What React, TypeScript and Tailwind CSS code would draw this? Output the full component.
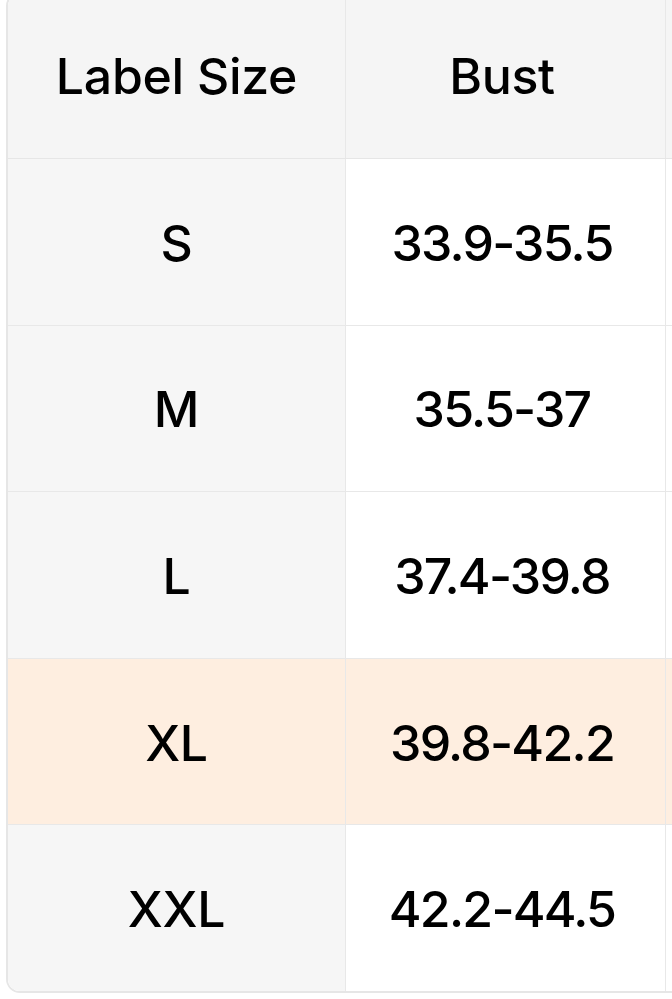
import React from "react";

type Row = {
  size: string;
  bust: string;
  active?: boolean;
};

const rows: Row[] = [
  { size: "S", bust: "33.9-35.5" },
  { size: "M", bust: "35.5-37" },
  { size: "L", bust: "37.4-39.8" },
  { size: "XL", bust: "39.8-42.2", active: true },
  { size: "XXL", bust: "42.2-44.5" },
];

function App() {
  return (
    <div className="w-[672px] h-[999px] overflow-hidden bg-white text-black font-['Inter','Liberation_Sans',sans-serif] font-medium tracking-[-0.018em]">
      <div className="ml-[6px] -mt-[8px] w-[1000px] border-2 border-[#e6e6e6] rounded-[14px] overflow-hidden">
        <div className="grid grid-cols-[338px_320px_340px] bg-[#f5f5f5] border-b border-[#e6e6e6]">
          <div className="h-[164px] flex items-center justify-center border-r border-[#e8e8e8] text-[50px]">
            Label Size
          </div>
          <div className="h-[164px] pr-[7px] flex items-center justify-center border-r border-[#e8e8e8] text-[50px]">
            Bust
          </div>
          <div className="h-[164px]" />
        </div>
        {rows.map((row, i) => (
          <div
            key={row.size}
            className={`grid grid-cols-[338px_320px_340px] ${
              i < rows.length - 1 ? "border-b border-[#e8e8e8]" : ""
            } ${row.active ? "bg-[#feeee0]" : "bg-white"}`}
          >
            <div
              className={`h-[165.6px] pt-[3px] flex items-center justify-center border-r border-[#e8e8e8] text-[50px] ${
                row.active ? "" : "bg-[#f6f6f6]"
              }`}
            >
              {row.size}
            </div>
            <div className="h-[165.6px] pt-[3px] pr-[7px] flex items-center justify-center border-r border-[#e8e8e8] text-[50px] tracking-[-0.035em]">
              {row.bust}
            </div>
            <div className="h-[165.6px]" />
          </div>
        ))}
      </div>
    </div>
  );
}

export default App;
